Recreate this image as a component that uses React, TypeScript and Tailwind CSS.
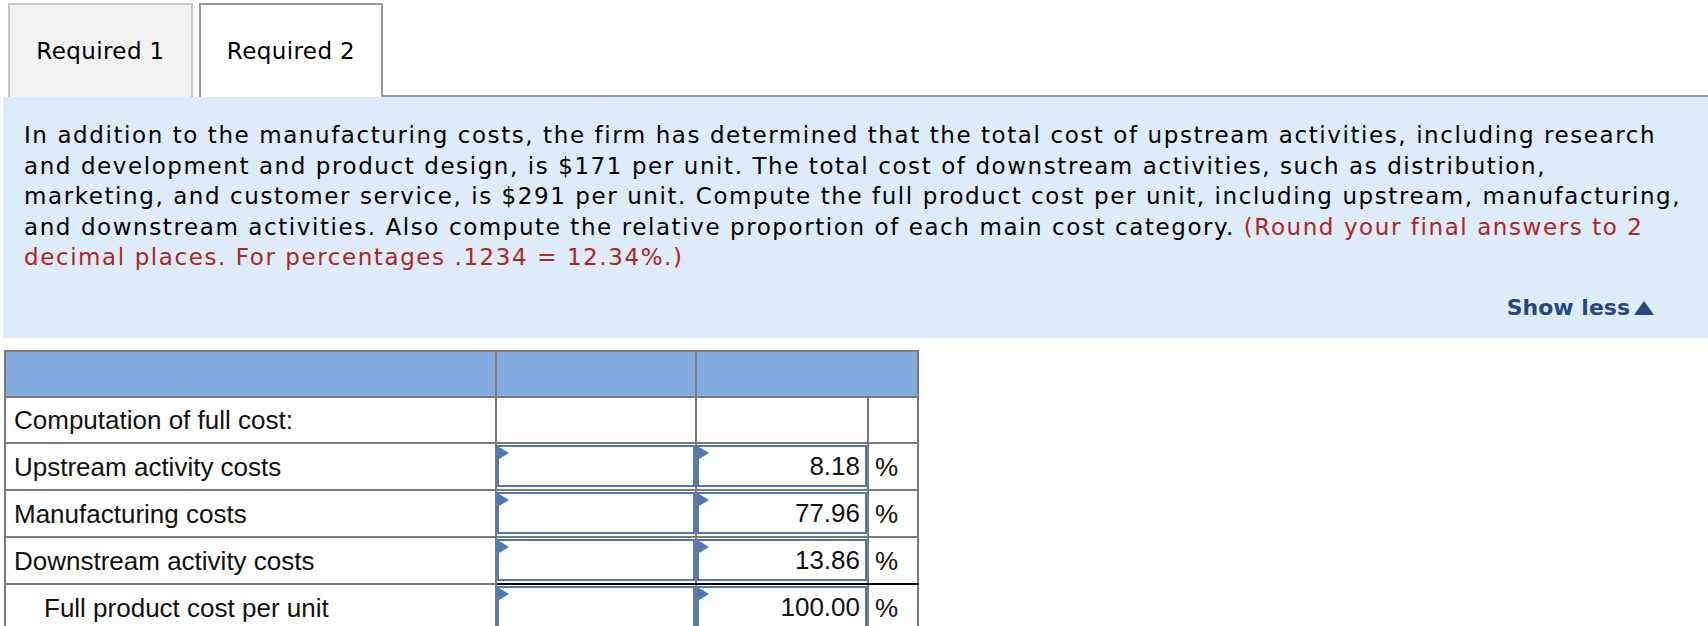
const rows = [
  { label: 'Upstream activity costs', pct: '8.18' },
  { label: 'Manufacturing costs', pct: '77.96' },
  { label: 'Downstream activity costs', pct: '13.86', totalLine: true },
  { label: 'Full product cost per unit', pct: '100.00', indent: true, totalLine: true },
]

function InputBox({ value }: { value?: string }) {
  return (
    <div className="relative h-[42px] border-2 border-[#4d79bb] bg-white flex items-center justify-end pr-[5px]">
      <span className="absolute left-0 top-0 w-0 h-0 border-y-[6px] border-y-transparent border-l-[10px] border-l-[#4d79bb]" />
      {value}
    </div>
  )
}

export default function App() {
  return (
    <div className="w-[1708px] h-[626px] bg-white overflow-hidden" style={{ fontFamily: '"DejaVu Sans", Verdana, sans-serif' }}>
      {/* tabs */}
      <div className="flex items-end pt-[3px]">
        <div className="w-[8px] shrink-0" />
        <div className="w-[185px] h-[94px] border-2 border-b-0 border-[#c8c8c8] bg-[#f2f2f2] flex items-center justify-center text-[23px] tracking-[0.4px] text-black">
          Required 1
        </div>
        <div className="w-[6px] shrink-0" />
        <div className="w-[184px] h-[94px] border-2 border-b-0 border-[#999999] bg-white flex items-center justify-center text-[23px] tracking-[0.4px] text-black">
          Required 2
        </div>
        <div className="flex-1 h-[2px] bg-[#999999]" />
      </div>

      {/* question panel */}
      <div className="ml-[3px] h-[241px] bg-[#deebf8] pl-[21px] pr-[10px] pt-[23px]">
        <p className="text-[23px] tracking-[1.58px] leading-[30.5px] text-black whitespace-nowrap">
          In addition to the manufacturing costs, the firm has determined that the total cost of upstream activities, including research
          <br />
          and development and product design, is $171 per unit. The total cost of downstream activities, such as distribution,
          <br />
          marketing, and customer service, is $291 per unit. Compute the full product cost per unit, including upstream, manufacturing,
          <br />
          and downstream activities. Also compute the relative proportion of each main cost category.{' '}
          <span className="text-[#b0251e]">
            (Round your final answers to 2
            <br />
            decimal places. For percentages .1234 = 12.34%.)
          </span>
        </p>
        <div className="flex justify-end items-center pr-[44px] mt-[22px]">
          <span className="text-[22px] leading-[26px] font-bold text-[#25497f]">Show less</span>
          <svg width="20" height="14" viewBox="0 0 20 14" className="ml-[4px] mt-[1px]">
            <polygon points="10,0 20,14 0,14" fill="#25497f" />
          </svg>
        </div>
      </div>

      {/* answer table */}
      <div className="pl-[4px] pt-[12px]">
        <table className="border-collapse text-[26px] text-[#111]" style={{ fontFamily: '"Liberation Sans", Arial, sans-serif' }}>
          <tbody>
            <tr className="h-[46px] bg-[#84abe0]">
              <td className="w-[491px] border-2 border-[#7a7a7a]" />
              <td className="w-[200px] border-2 border-[#7a7a7a]" />
              <td colSpan={2} className="w-[222px] border-2 border-[#7a7a7a]" />
            </tr>
            <tr className="h-[46px]">
              <td className="border-2 border-[#7a7a7a] pl-[8px] leading-none">Computation of full cost:</td>
              <td className="border-2 border-[#7a7a7a]" />
              <td className="w-[172px] border-2 border-[#7a7a7a]" />
              <td className="w-[50px] border-2 border-[#7a7a7a]" />
            </tr>
            {rows.map((r) => (
              <tr key={r.label} className="h-[47px]">
                <td className={`border-2 border-[#7a7a7a] leading-none ${r.indent ? 'pl-[38px]' : 'pl-[8px]'}`}>{r.label}</td>
                <td className={`border-2 border-[#7a7a7a] p-0 pt-[1px] pb-[2px] ${r.totalLine ? 'border-b-black' : ''}`}>
                  <InputBox />
                </td>
                <td className={`border-2 border-[#7a7a7a] p-0 pt-[1px] pb-[2px] ${r.totalLine ? 'border-b-black' : ''}`}>
                  <InputBox value={r.pct} />
                </td>
                <td className={`border-2 border-[#7a7a7a] pl-[6px] leading-none ${r.totalLine ? 'border-b-black' : ''}`}>%</td>
              </tr>
            ))}
          </tbody>
        </table>
      </div>
    </div>
  )
}
